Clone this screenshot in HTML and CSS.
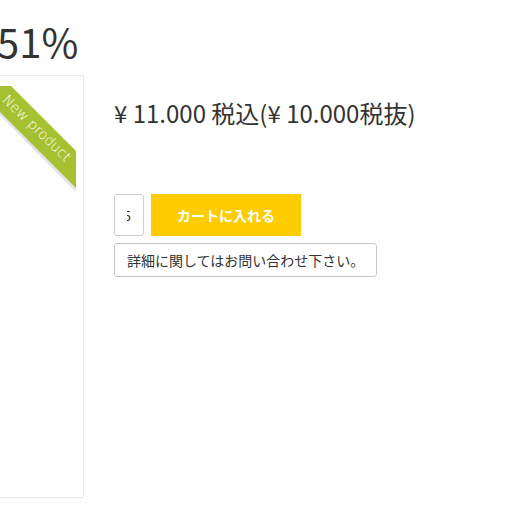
FILE: index.html
```html
<!DOCTYPE html>
<html>
<head>
  <meta charset="UTF-8">
  <title>商品詳細</title>
  <meta name="viewport" content="width=device-width, initial-scale=1">
  <link rel="stylesheet" href="styles.css">
</head>
<body>
  <div class="rate">51%</div>
  <div class="detail">
    <div class="photo">
      <svg class="ribbon" width="124" height="112" viewBox="0 0 124 112">
        <polygon points="18,3 22,3 120,101 120,106" fill="#e2e2e2"/>
        <polygon points="18,0 55,0 120,65 120,102" fill="#a5c030"/>
        <text x="0" y="5" transform="translate(81,42) rotate(44)" text-anchor="middle" class="ribbon-text">New product</text>
      </svg>
    </div>
    <div class="info">
      <p class="price">¥ 11.000 税込(¥ 10.000税抜)</p>
      <div class="cart">
        <div class="qty"><span>5</span></div>
        <button class="btn-cart">カートに入れる</button>
      </div>
      <button class="btn-ask">詳細に関してはお問い合わせ下さい。</button>
    </div>
  </div>
</body>
</html>
```

FILE: styles.css
```css
body { margin: 0; font-family: "Noto Sans CJK JP", "Noto Sans", sans-serif; color: #333; background: #fff; overflow: hidden; }
.rate { font-size: 40px; line-height: 1; margin: 21px 0 0 -3px; }
.detail { display: flex; gap: 30px; margin-top: 14px; }
.photo {
  position: relative;
  width: 102px;
  height: 421px;
  margin-left: -20px;
  border: 1px solid #ebebeb;
  overflow: hidden;
}
.ribbon { position: absolute; top: 10px; right: 3px; }
.ribbon-text { fill: #fff; font-family: "DejaVu Sans", sans-serif; font-size: 14px; font-weight: 200; }
.info { padding-top: 22px; }
.price { margin: 0; font-size: 24px; line-height: 32px; }
.cart { display: flex; gap: 7px; margin-top: 65px; }
.qty {
  box-sizing: border-box;
  width: 30px;
  height: 42px;
  border: 1px solid #ccc;
  border-radius: 3px;
  display: flex;
  align-items: center;
  padding-left: 12px;
}
.qty span { display: flex; justify-content: flex-end; width: 4px; overflow: hidden; font-size: 13px; }
.btn-cart {
  width: 150px;
  height: 42px;
  border: 0;
  background: #ffcc00;
  color: #fff;
  font-family: inherit;
  font-size: 14px;
  font-weight: bold;
}
.btn-ask {
  display: block;
  margin-top: 7px;
  height: 34px;
  padding: 0 12px;
  background: #fff;
  border: 1px solid #c8c8c8;
  border-radius: 3px;
  color: #333;
  font-family: inherit;
  font-size: 14px;
}
```
